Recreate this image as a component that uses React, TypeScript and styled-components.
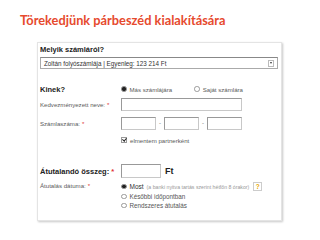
import React from "react";
import styled, { createGlobalStyle } from "styled-components";

const Global = createGlobalStyle`
  html, body { margin: 0; padding: 0; background: #fff; }
  body { width: 320px; height: 240px; overflow: hidden; font-family: "Liberation Sans", Arial, sans-serif; }
`;

const Page = styled.div`
  display: flex;
  flex-direction: column;
  padding: 11px 0 0 20px;
`;

const Title = styled.h1`
  margin: 0;
  font-family: Lato, "Liberation Sans", sans-serif;
  font-weight: 700;
  font-size: 12.8px;
  line-height: 18px;
  color: #e64a2e;
`;

const Panel = styled.div`
  margin: 13px 0 0 17px;
  width: 241px;
  border: 1px solid #e4e4e4;
  box-shadow: 1px 1px 2px rgba(0, 0, 0, 0.22);
  padding: 0 0 6px 2px;
  display: flex;
  flex-direction: column;
`;

const Section = styled.div<{ $pt: number; $h: number }>`
  padding-top: ${(p) => p.$pt}px;
  height: ${(p) => p.$h}px;
  box-sizing: border-box;
  display: flex;
  flex-direction: column;
`;

const Heading = styled.div`
  font-size: 7.5px;
  font-weight: 700;
  color: #222;
  line-height: 10px;
`;

const Select = styled.div`
  margin-top: 2px;
  width: 238px;
  height: 12px;
  box-sizing: border-box;
  border: 1px solid #aaa;
  border-top-color: #888;
  display: flex;
  align-items: center;
  justify-content: space-between;
  padding: 0 3px 0 3px;
  font-size: 6.3px;
  color: #333;
`;

const Arrow = styled.span`
  width: 6px;
  height: 7px;
  border: 1px solid #bbb;
  box-sizing: border-box;
  display: flex;
  align-items: center;
  justify-content: center;
  &::after {
    content: "";
    border-left: 1.5px solid transparent;
    border-right: 1.5px solid transparent;
    border-top: 2px solid #333;
  }
`;

const Row = styled.div<{ $h: number; $top?: boolean }>`
  display: grid;
  grid-template-columns: 81px 1fr;
  align-items: ${(p) => (p.$top ? "start" : "center")};
  padding-top: ${(p) => (p.$top ? 3 : 0)}px;
  box-sizing: border-box;
  height: ${(p) => p.$h}px;
`;

const Label = styled.div<{ $bold?: boolean }>`
  font-size: ${(p) => (p.$bold ? "7.5px" : "6.1px")};
  font-weight: ${(p) => (p.$bold ? 700 : 400)};
  color: ${(p) => (p.$bold ? "#222" : "#5a5a5a")};
  white-space: nowrap;
`;

const Star = styled.span`
  color: #e03030;
  margin-left: 2px;
`;

const Field = styled.div`
  display: flex;
  align-items: center;
  font-size: 6.1px;
  color: #5a5a5a;
  white-space: nowrap;
`;

const Input = styled.div<{ $w: number; $h?: number }>`
  width: ${(p) => p.$w}px;
  height: ${(p) => p.$h ?? 13}px;
  box-sizing: border-box;
  border: 1px solid #c8c8c8;
  border-top-color: #999;
  border-left-color: #999;
  background: #fff;
`;

const Dash = styled.span`
  width: 8px;
  text-align: center;
  color: #666;
  font-size: 6px;
`;

const Radio = styled.span<{ $on?: boolean }>`
  display: inline-block;
  width: 3.5px;
  height: 3.5px;
  border-radius: 50%;
  border: 0.7px solid #999;
  background: ${(p) => (p.$on ? "#222" : "#fff")};
  margin-right: 3px;
  flex: none;
`;

const Check = styled.span`
  display: inline-block;
  width: 4px;
  height: 4px;
  border: 0.7px solid #999;
  margin-right: 3px;
  position: relative;
  &::after {
    content: "";
    position: absolute;
    left: 1px;
    top: -1px;
    width: 1.5px;
    height: 3px;
    border-right: 1px solid #222;
    border-bottom: 1px solid #222;
    transform: rotate(40deg);
  }
`;

const Opt = styled.span<{ $gap?: number }>`
  display: inline-flex;
  align-items: center;
  white-space: nowrap;
  margin-right: ${(p) => p.$gap ?? 0}px;
`;

const Dark = styled.span`
  color: #333;
  font-size: 6.5px;
`;

const Note = styled.span`
  color: #999;
  font-size: 5.2px;
  margin-left: 3px;
`;

const Help = styled.span`
  margin-left: 4px;
  width: 9px;
  height: 9px;
  border: 1px solid #ccc;
  box-sizing: border-box;
  display: inline-flex;
  align-items: center;
  justify-content: center;
  color: #e8a800;
  font-size: 6.5px;
  font-weight: 700;
  flex: none;
`;

const Ft = styled.span`
  font-size: 9px;
  font-weight: 700;
  color: #222;
  margin-left: 4px;
`;

const Stack = styled.div`
  display: flex;
  flex-direction: column;
  gap: 2px;
  font-size: 6.3px;
  color: #555;
`;

export default function App() {
  return (
    <>
      <Global />
      <Page>
        <Title>Törekedjünk párbeszéd kialakítására</Title>
        <Panel>
          <Section $pt={2} $h={37}>
            <Heading>Melyik számláról?</Heading>
            <Select>
              <span>Zoltán folyószámlája | Egyenleg: 123 214 Ft</span>
              <Arrow />
            </Select>
          </Section>
          <Section $pt={2} $h={74}>
            <Row $h={14}>
              <Label $bold>Kinek?</Label>
              <Field>
                <Opt $gap={22}><Radio $on />Más számlájára</Opt>
                <Opt><Radio />Saját számlára</Opt>
              </Field>
            </Row>
            <Row $h={16}>
              <Label>Kedvezményezett neve:<Star>*</Star></Label>
              <Field><Input $w={121} /></Field>
            </Row>
            <Row $h={22}>
              <Label>Számlaszáma:<Star>*</Star></Label>
              <Field>
                <Input $w={35} />
                <Dash>-</Dash>
                <Input $w={35} />
                <Dash>-</Dash>
                <Input $w={35} />
              </Field>
            </Row>
            <Row $h={12}>
              <span />
              <Field><Check />elmentem partnerként</Field>
            </Row>
          </Section>
          <Section $pt={9} $h={60}>
            <Row $h={16}>
              <Label $bold>Átutalandó összeg:<Star>*</Star></Label>
              <Field>
                <Input $w={40} $h={14} />
                <Ft>Ft</Ft>
              </Field>
            </Row>
            <Row $h={33} $top>
              <Label>Átutalás dátuma:<Star>*</Star></Label>
              <Stack>
                <Opt><Radio $on /><Dark>Most</Dark><Note>(a banki nyitva tartás szerint hétfőn 8 órakor)</Note><Help>?</Help></Opt>
                <Opt><Radio />Későbbi időpontban</Opt>
                <Opt><Radio />Rendszeres átutalás</Opt>
              </Stack>
            </Row>
          </Section>
        </Panel>
      </Page>
    </>
  );
}
